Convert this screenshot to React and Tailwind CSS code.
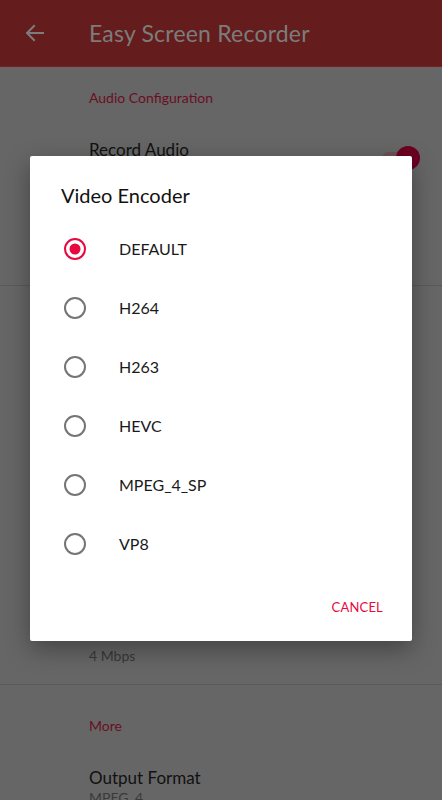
import React, { useState } from 'react';

const encoders = ['DEFAULT', 'H264', 'H263', 'HEVC', 'MPEG_4_SP', 'VP8'];

const Radio = ({ checked }) => (
  <svg width="24" height="24" viewBox="0 0 24 24">
    <circle cx="12" cy="12" r="10" fill="none" stroke={checked ? '#e8083e' : '#757575'} strokeWidth="2" />
    {checked && <circle cx="12" cy="12" r="5.5" fill="#e8083e" />}
  </svg>
);

export default function App() {
  const [selected, setSelected] = useState('DEFAULT');

  return (
    <div className="relative h-[800px] w-[442px] overflow-hidden bg-[#666666]" style={{ fontFamily: 'Lato, "Noto Sans", sans-serif' }}>
      {/* toolbar (dimmed behind the dialog) */}
      <div className="flex h-[67px] items-center border-b border-[#7a1f1f] bg-[#641c1c]">
        <div className="flex w-[89px] items-center pl-[23px]">
          <svg width="24" height="24" viewBox="0 0 24 24" fill="none" stroke="#7c7c7c" strokeWidth="2" strokeLinecap="square">
            <path d="M20 12H5M11 5l-7 7 7 7" />
          </svg>
        </div>
        <span className="text-[23px] tracking-[0.2px] text-[#7c7c7c]">Easy Screen Recorder</span>
      </div>

      {/* settings list */}
      <div className="pl-[89px] pr-6">
        <div className="pt-[20px] text-[14px] leading-[21px] text-[#6a0f24]">Audio Configuration</div>
        <div className="mt-[31px] flex items-start justify-between">
          <span className="text-[17px] leading-[22px] text-[#111111]">Record Audio</span>
          <div className="relative mt-[7px] h-[24px] w-[36px]">
            <div className="absolute left-0 top-[6px] h-[13px] w-[32px] rounded-full bg-[#6e5158]" />
            <div className="absolute right-[-2px] top-0 h-[24px] w-[24px] rounded-full bg-[#6b0020]" />
          </div>
        </div>
      </div>
      <div className="mt-[115px] h-px bg-[#5a5a5a]" />

      <div className="pl-[89px]">
        <div className="mt-[359px] text-[14px] leading-[21px] text-[#383838]">4 Mbps</div>
      </div>
      <div className="mt-[18px] h-px bg-[#5a5a5a]" />
      <div className="pl-[89px]">
        <div className="mt-[30px] text-[14px] leading-[21px] text-[#6a0f24]">More</div>
        <div className="mt-[31px] text-[17px] leading-[22px] text-[#111111]">Output Format</div>
        <div className="text-[14px] leading-[18px] text-[#3a3a3a]">MPEG_4</div>
      </div>

      {/* dialog */}
      <div className="absolute inset-0 flex items-start justify-center pt-[156px]">
        <div className="w-[382px] rounded-[2px] bg-white shadow-[0_8px_24px_rgba(0,0,0,0.35)]">
          <div className="px-[31px] pt-[25px] text-[20px] leading-[28px] text-[#111111]">Video Encoder</div>
          <div className="mt-[10px]">
            {encoders.map((name) => (
              <button
                key={name}
                onClick={() => setSelected(name)}
                className="flex h-[59px] w-full items-center text-left"
              >
                <div className="flex w-[89px] justify-center pl-[1px]">
                  <Radio checked={selected === name} />
                </div>
                <span className="text-[16px] text-[#1a1a1a]">{name}</span>
              </button>
            ))}
          </div>
          <div className="flex justify-end px-[29px] pb-[15px] pt-[17px]">
            <button className="h-[36px] text-[13px] tracking-[0.2px] text-[#e8083e]">CANCEL</button>
          </div>
        </div>
      </div>
    </div>
  );
}
